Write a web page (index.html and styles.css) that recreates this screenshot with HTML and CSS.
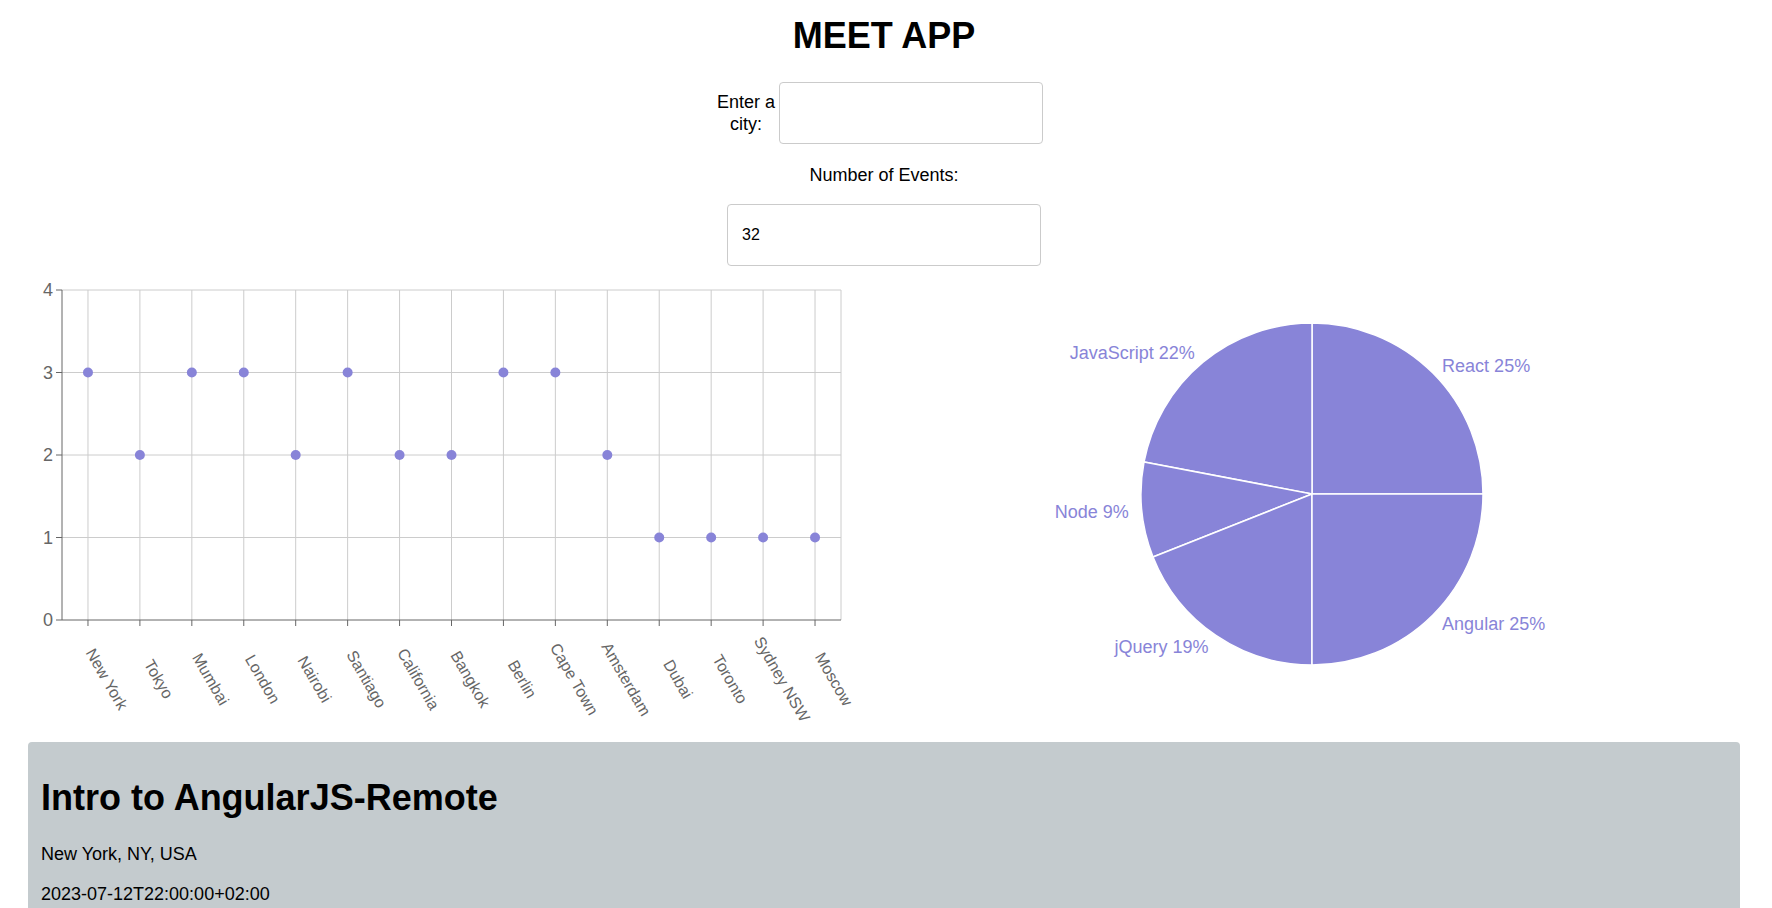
FILE: index.html
```html
<!DOCTYPE html>
<html lang="en">
<head>
<meta charset="utf-8">
<title>Meet App</title>
<link rel="stylesheet" href="styles.css">
</head>
<body>
<div class="app">
  <h1 class="title">MEET APP</h1>
  <div class="city-row">
    <label class="city-label" for="city">Enter a city:</label>
    <input id="city" class="city-input" type="text">
  </div>
  <div class="num-block">
    <label class="num-label" for="num">Number of Events:</label>
    <input id="num" class="num-input" type="text" value="32">
  </div>
  <div class="charts">
    <div class="chart-cell">
      <svg class="chart" width="856" height="460" viewBox="0 0 856 460">
        <g class="grid">
          <line x1="34" y1="20" x2="813" y2="20"/>
          <line x1="34" y1="102.5" x2="813" y2="102.5"/>
          <line x1="34" y1="185" x2="813" y2="185"/>
          <line x1="34" y1="267.5" x2="813" y2="267.5"/>
          <line x1="813" y1="20" x2="813" y2="350"/>
          <line x1="59.97" y1="20" x2="59.97" y2="350"/>
          <line x1="111.9" y1="20" x2="111.9" y2="350"/>
          <line x1="163.83" y1="20" x2="163.83" y2="350"/>
          <line x1="215.77" y1="20" x2="215.77" y2="350"/>
          <line x1="267.7" y1="20" x2="267.7" y2="350"/>
          <line x1="319.63" y1="20" x2="319.63" y2="350"/>
          <line x1="371.57" y1="20" x2="371.57" y2="350"/>
          <line x1="423.5" y1="20" x2="423.5" y2="350"/>
          <line x1="475.43" y1="20" x2="475.43" y2="350"/>
          <line x1="527.37" y1="20" x2="527.37" y2="350"/>
          <line x1="579.3" y1="20" x2="579.3" y2="350"/>
          <line x1="631.23" y1="20" x2="631.23" y2="350"/>
          <line x1="683.17" y1="20" x2="683.17" y2="350"/>
          <line x1="735.1" y1="20" x2="735.1" y2="350"/>
          <line x1="787.03" y1="20" x2="787.03" y2="350"/>
        </g>
        <g class="axis">
          <line x1="34" y1="20" x2="34" y2="350"/>
          <line x1="34" y1="350" x2="813" y2="350"/>
          <line x1="28" y1="20" x2="34" y2="20"/>
          <line x1="28" y1="102.5" x2="34" y2="102.5"/>
          <line x1="28" y1="185" x2="34" y2="185"/>
          <line x1="28" y1="267.5" x2="34" y2="267.5"/>
          <line x1="28" y1="350" x2="34" y2="350"/>
          <line x1="59.97" y1="350" x2="59.97" y2="356"/>
          <line x1="111.9" y1="350" x2="111.9" y2="356"/>
          <line x1="163.83" y1="350" x2="163.83" y2="356"/>
          <line x1="215.77" y1="350" x2="215.77" y2="356"/>
          <line x1="267.7" y1="350" x2="267.7" y2="356"/>
          <line x1="319.63" y1="350" x2="319.63" y2="356"/>
          <line x1="371.57" y1="350" x2="371.57" y2="356"/>
          <line x1="423.5" y1="350" x2="423.5" y2="356"/>
          <line x1="475.43" y1="350" x2="475.43" y2="356"/>
          <line x1="527.37" y1="350" x2="527.37" y2="356"/>
          <line x1="579.3" y1="350" x2="579.3" y2="356"/>
          <line x1="631.23" y1="350" x2="631.23" y2="356"/>
          <line x1="683.17" y1="350" x2="683.17" y2="356"/>
          <line x1="735.1" y1="350" x2="735.1" y2="356"/>
          <line x1="787.03" y1="350" x2="787.03" y2="356"/>
        </g>
        <g class="ytick">
          <text x="25" y="20" dy="0.355em">4</text>
          <text x="25" y="102.5" dy="0.355em">3</text>
          <text x="25" y="185" dy="0.355em">2</text>
          <text x="25" y="267.5" dy="0.355em">1</text>
          <text x="25" y="350" dy="0.355em">0</text>
        </g>
        <g class="xtick">
          <text transform="translate(78.97 409) rotate(60)" dy="0.355em">New York</text>
          <text transform="translate(130.9 409) rotate(60)" dy="0.355em">Tokyo</text>
          <text transform="translate(182.83 409) rotate(60)" dy="0.355em">Mumbai</text>
          <text transform="translate(234.77 409) rotate(60)" dy="0.355em">London</text>
          <text transform="translate(286.7 409) rotate(60)" dy="0.355em">Nairobi</text>
          <text transform="translate(338.63 409) rotate(60)" dy="0.355em">Santiago</text>
          <text transform="translate(390.57 409) rotate(60)" dy="0.355em">California</text>
          <text transform="translate(442.5 409) rotate(60)" dy="0.355em">Bangkok</text>
          <text transform="translate(494.43 409) rotate(60)" dy="0.355em">Berlin</text>
          <text transform="translate(546.37 409) rotate(60)" dy="0.355em">Cape Town</text>
          <text transform="translate(598.3 409) rotate(60)" dy="0.355em">Amsterdam</text>
          <text transform="translate(650.23 409) rotate(60)" dy="0.355em">Dubai</text>
          <text transform="translate(702.17 409) rotate(60)" dy="0.355em">Toronto</text>
          <text transform="translate(754.1 409) rotate(60)" dy="0.355em">Sydney NSW</text>
          <text transform="translate(806.03 409) rotate(60)" dy="0.355em">Moscow</text>
        </g>
        <g class="dots">
          <circle cx="59.97" cy="102.5" r="5"/>
          <circle cx="111.9" cy="185" r="5"/>
          <circle cx="163.83" cy="102.5" r="5"/>
          <circle cx="215.77" cy="102.5" r="5"/>
          <circle cx="267.7" cy="185" r="5"/>
          <circle cx="319.63" cy="102.5" r="5"/>
          <circle cx="371.57" cy="185" r="5"/>
          <circle cx="423.5" cy="185" r="5"/>
          <circle cx="475.43" cy="102.5" r="5"/>
          <circle cx="527.37" cy="102.5" r="5"/>
          <circle cx="579.3" cy="185" r="5"/>
          <circle cx="631.23" cy="267.5" r="5"/>
          <circle cx="683.17" cy="267.5" r="5"/>
          <circle cx="735.1" cy="267.5" r="5"/>
          <circle cx="787.03" cy="267.5" r="5"/>
        </g>
      </svg>
    </div>
    <div class="chart-cell">
      <svg class="chart" width="856" height="460" viewBox="0 0 856 460">
        <g class="sectors">
          <path d="M428 224 L599 224 A171 171 0 0 0 428 53 Z"/>
          <path d="M428 224 L428 53 A171 171 0 0 0 260.03 191.96 Z"/>
          <path d="M428 224 L260.03 191.96 A171 171 0 0 0 269.01 286.95 Z"/>
          <path d="M428 224 L269.01 286.95 A171 171 0 0 0 428 395 Z"/>
          <path d="M428 224 L428 395 A171 171 0 0 0 599 224 Z"/>
        </g>
        <g class="pie-labels">
          <text class="lab-start" x="558.1" y="95.5" dy="0.355em">React 25%</text>
          <text class="lab-end" x="310.7" y="82.2" dy="0.355em">JavaScript 22%</text>
          <text class="lab-end" x="244.8" y="241.3" dy="0.355em">Node 9%</text>
          <text class="lab-end" x="324.6" y="376.2" dy="0.355em">jQuery 19%</text>
          <text class="lab-start" x="558.1" y="354.1" dy="0.355em">Angular 25%</text>
        </g>
      </svg>
    </div>
  </div>
  <ul class="event-list">
    <li class="event">
      <h2 class="event-title">Intro to AngularJS-Remote</h2>
      <p class="event-line">New York, NY, USA</p>
      <p class="event-line">2023-07-12T22:00:00+02:00</p>
    </li>
  </ul>
</div>
</body>
</html>
```

FILE: styles.css
```css
html, body {
  margin: 0;
  padding: 0;
  background: #fff;
  overflow: hidden;
}

body {
  font-family: "Liberation Sans", Arial, sans-serif;
  font-size: 18px;
  color: #000;
}

.app {
  width: 1768px;
  padding-top: 15px;
}

.title {
  margin: 0;
  font-size: 36px;
  line-height: 41px;
  font-weight: bold;
  text-align: center;
}

.city-row {
  display: flex;
  justify-content: center;
  align-items: center;
  gap: 3px;
  margin-top: 26px;
  padding-right: 9px;
}

.city-label {
  width: 60px;
  text-align: center;
  line-height: 22px;
}

.city-input,
.num-input {
  box-sizing: border-box;
  height: 62px;
  border: 1px solid #cbcbcb;
  border-radius: 4px;
  font-family: "Liberation Sans", Arial, sans-serif;
  font-size: 16px;
  color: #000;
  background: #fff;
  outline: none;
}

.city-input {
  width: 264px;
  padding: 0 14px;
}

.num-block {
  margin-top: 21px;
}

.num-label {
  display: block;
  text-align: center;
  line-height: 21px;
}

.num-input {
  display: block;
  width: 314px;
  margin: 18px auto 0;
  padding: 0 14px;
}

.charts {
  display: grid;
  grid-template-columns: 856px 856px;
  padding: 0 28px;
  margin-top: 4px;
}

.chart-cell {
  height: 460px;
}

.chart {
  display: block;
  font-family: "Liberation Sans", Arial, sans-serif;
}

.grid line {
  stroke: #ccc;
  stroke-width: 1;
}

.axis line {
  stroke: #666;
  stroke-width: 1;
}

.ytick text {
  fill: #666;
  font-size: 18px;
  text-anchor: end;
}

.xtick text {
  fill: #666;
  font-size: 16px;
  text-anchor: middle;
}

.dots circle {
  fill: #8884d8;
}

.sectors path {
  fill: #8884d8;
  stroke: #fff;
  stroke-width: 1.5;
}

.pie-labels text {
  fill: #8884d8;
  font-size: 18px;
}

.lab-start {
  text-anchor: start;
}

.lab-end {
  text-anchor: end;
}

.event-list {
  list-style: none;
  margin: 12px 28px 0;
  padding: 0;
}

.event {
  background: #c4cbce;
  border-radius: 4px;
  padding: 14px 13px;
  height: 400px;
}

.event-title {
  margin: 21px 0 26px;
  font-size: 36px;
  line-height: 41px;
  font-weight: bold;
}

.event-line {
  margin: 0;
  line-height: 21px;
}

.event-line + .event-line {
  margin-top: 19px;
}
```
